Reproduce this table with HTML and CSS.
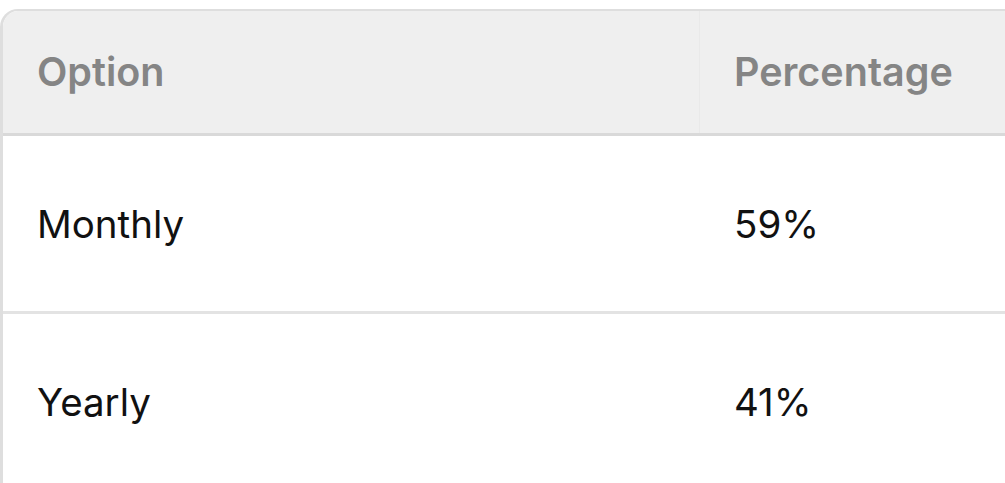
FILE: index.html
```html
<!DOCTYPE html>
<html>
<head>
<meta charset="utf-8">
<link rel="stylesheet" href="styles.css">
</head>
<body>
<div class="table">
  <div class="row head">
    <div class="cell first">Option</div>
    <div class="cell second">Percentage</div>
  </div>
  <div class="row">
    <div class="cell first">Monthly</div>
    <div class="cell second">59%</div>
  </div>
  <div class="row">
    <div class="cell first">Yearly</div>
    <div class="cell second">41%</div>
  </div>
</div>
</body>
</html>
```
FILE: styles.css
```css
html, body {
  margin: 0;
  padding: 0;
  background: #ffffff;
  overflow: hidden;
  width: 1005px;
  height: 483px;
}
body {
  font-family: "Inter", "Noto Sans", sans-serif;
  padding-top: 9px;
  box-sizing: border-box;
}
.table {
  box-sizing: border-box;
  width: 1005px;
  border-left: 3px solid #dedede;
  border-top: 2px solid #dedede;
  border-top-left-radius: 18px;
  overflow: hidden;
}
.row {
  display: grid;
  grid-template-columns: 697px 1fr;
  height: 175px;
  border-bottom: 3px solid #e3e3e3;
  align-items: center;
  font-size: 38.5px;
  color: #111111;
}
.row.head {
  height: 122px;
  background: #efefef;
  color: #858585;
  font-weight: 600;
  font-size: 39.5px;
  border-bottom-color: #d9d9d9;
}
.cell {
  height: 100%;
  display: flex;
  align-items: center;
  white-space: nowrap;
}
.cell.first {
  padding-left: 34px;
}
.cell.second {
  padding-left: 34px;
}
.head .cell.first {
  border-right: 1px solid #e9e9e9;
}
```
